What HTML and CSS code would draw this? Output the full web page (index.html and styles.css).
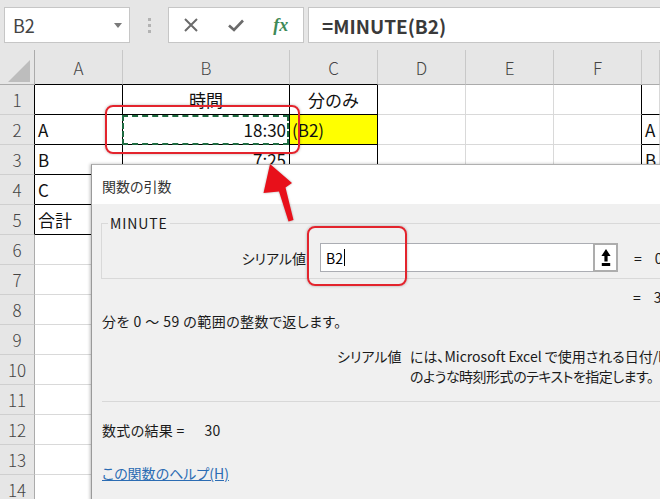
FILE: index.html
```html
<!DOCTYPE html>
<html lang="ja">
<head>
<meta charset="utf-8">
<title>Excel MINUTE</title>
<link rel="stylesheet" href="styles.css">
</head>
<body>
<div class="toolbar">
  <div class="namebox"><span>B2</span><svg class="dd" width="8" height="5" viewBox="0 0 8 5"><polygon points="0,0 8,0 4,5"/></svg></div>
  <div class="grip"><i></i><i></i><i></i></div>
  <div class="fbtns">
    <span class="slot"><svg width="14" height="14" viewBox="0 0 14 14"><path d="M1 1 L13 13 M13 1 L1 13" stroke="#6b6b6b" stroke-width="2" fill="none"/></svg></span>
    <span class="slot"><svg width="16" height="13" viewBox="0 0 16 13"><path d="M1 6.5 L6 11 L15 1.5" stroke="#6b6b6b" stroke-width="2.6" fill="none"/></svg></span>
    <span class="slot fx">fx</span>
  </div>
  <div class="formula">=MINUTE(B2)</div>
</div>

<div class="sheet">
  <div class="c corner"><svg width="24" height="24" viewBox="0 0 24 24"><polygon points="22,2 22,24 0,24" fill="#bdbdbd"/></svg></div>
  <div class="c ch kb">A</div><div class="c ch kb">B</div><div class="c ch kb">C</div><div class="c ch">D</div><div class="c ch">E</div><div class="c ch">F</div><div class="c ch"></div>

  <div class="c rh kr">1</div><div class="c k"></div><div class="c k mid">時間</div><div class="c k mid">分のみ</div><div class="c"></div><div class="c"></div><div class="c kr"></div><div class="c kb"></div>
  <div class="c rh kr">2</div><div class="c k">A</div><div class="c k right sel">18:30</div><div class="c k yellow">(B2)</div><div class="c"></div><div class="c"></div><div class="c kr"></div><div class="c kb">A</div>
  <div class="c rh kr">3</div><div class="c k">B</div><div class="c k right">7:25</div><div class="c k"></div><div class="c"></div><div class="c"></div><div class="c kr"></div><div class="c kb">B</div>
  <div class="c rh kr">4</div><div class="c k">C</div><div class="c k"></div><div class="c k"></div><div class="c"></div><div class="c"></div><div class="c"></div><div class="c"></div>
  <div class="c rh kr">5</div><div class="c k">合計</div><div class="c k"></div><div class="c k"></div><div class="c"></div><div class="c"></div><div class="c"></div><div class="c"></div>
  <div class="c rh">6</div><div class="c"></div><div class="c"></div><div class="c"></div><div class="c"></div><div class="c"></div><div class="c"></div><div class="c"></div>
  <div class="c rh">7</div><div class="c"></div><div class="c"></div><div class="c"></div><div class="c"></div><div class="c"></div><div class="c"></div><div class="c"></div>
  <div class="c rh">8</div><div class="c"></div><div class="c"></div><div class="c"></div><div class="c"></div><div class="c"></div><div class="c"></div><div class="c"></div>
  <div class="c rh">9</div><div class="c"></div><div class="c"></div><div class="c"></div><div class="c"></div><div class="c"></div><div class="c"></div><div class="c"></div>
  <div class="c rh">10</div><div class="c"></div><div class="c"></div><div class="c"></div><div class="c"></div><div class="c"></div><div class="c"></div><div class="c"></div>
  <div class="c rh">11</div><div class="c"></div><div class="c"></div><div class="c"></div><div class="c"></div><div class="c"></div><div class="c"></div><div class="c"></div>
  <div class="c rh">12</div><div class="c"></div><div class="c"></div><div class="c"></div><div class="c"></div><div class="c"></div><div class="c"></div><div class="c"></div>
  <div class="c rh">13</div><div class="c"></div><div class="c"></div><div class="c"></div><div class="c"></div><div class="c"></div><div class="c"></div><div class="c"></div>
  <div class="c rh">14</div><div class="c"></div><div class="c"></div><div class="c"></div><div class="c"></div><div class="c"></div><div class="c"></div><div class="c"></div>
</div>

<div class="dialog">
  <div class="dlg-title">関数の引数</div>
  <div class="dlg-body">
    <div class="group">
      <div class="legend">MINUTE</div>
      <div class="argrow">
        <div class="arglabel">シリアル値</div>
        <div class="arginput">B2<span class="caret"></span></div>
        <div class="refbtn"><svg width="10" height="18" viewBox="0 0 10 18"><polygon points="5,0 9.6,7 6.6,7 6.6,12.5 3.4,12.5 3.4,7 0.4,7" fill="#000"/><rect x="0.8" y="14" width="8.4" height="3" fill="#000"/></svg></div>
        <div class="eq">=</div>
        <div class="val">0.770833333</div>
      </div>
    </div>
    <div class="resrow"><span class="eq">=</span><span class="val res">30</span></div>
    <p class="desc">分を 0 ～ 59 の範囲の整数で返します。</p>
    <div class="argdesc">
      <div class="adlabel">シリアル値</div>
      <div class="adtext"><div>には、Microsoft Excel で使用される日付/時刻コード、または "16:48:00" や "4:48:00 PM"</div><div class="l2">のような時刻形式のテキストを指定します。</div></div>
    </div>
    <div class="sep"></div>
    <div class="result">数式の結果 =<span class="rv">30</span></div>
    <a class="help">この関数のヘルプ(H)</a>
  </div>
</div>

<div class="hl hl1"></div>
<div class="hl hl2"></div>
<svg class="arrow" width="660" height="499" viewBox="0 0 660 499">
  <polygon points="270,164 292,183 285.5,187.5 293.5,220 288.5,221.5 279,191.5 263.5,193" fill="#e8101a"/>
</svg>
</body>
</html>
```

FILE: styles.css
```css
* { box-sizing: border-box; }
html, body {
  margin: 0;
  padding: 0;
  width: 660px;
  height: 499px;
  overflow: hidden;
  background: #fff;
}
body {
  position: relative;
  font-family: "Noto Sans CJK JP", "Noto Sans", sans-serif;
  color: #222;
}

/* ---------- formula bar ---------- */
.toolbar {
  height: 50px;
  background: #e6e6e6;
  display: flex;
  align-items: flex-start;
  padding-top: 7px;
}
.namebox {
  margin-left: 4px;
  width: 126px;
  height: 36px;
  background: #fff;
  border: 1px solid #c6c6c6;
  display: flex;
  align-items: center;
  justify-content: space-between;
  padding: 0 7px 0 8px;
  font-size: 18px;
  line-height: 1;
  color: #444;
}
.namebox .dd { fill: #7a7a7a; }
.grip {
  width: 38px;
  height: 36px;
  display: flex;
  flex-direction: column;
  align-items: center;
  justify-content: center;
  gap: 3px;
}
.grip i {
  display: block;
  width: 3px;
  height: 3px;
  background: #b3b3b3;
}
.fbtns {
  width: 136px;
  height: 36px;
  background: #fff;
  border: 1px solid #c6c6c6;
  display: flex;
  align-items: center;
}
.slot {
  width: 45px;
  display: flex;
  justify-content: center;
  align-items: center;
}
.fx {
  font-family: "Liberation Serif", "DejaVu Serif", serif;
  font-style: italic;
  font-weight: 700;
  font-size: 18px;
  color: #3f8a58;
  line-height: 1;
}
.formula {
  margin-left: 4px;
  flex: 1;
  height: 36px;
  background: #fff;
  border: 1px solid #c6c6c6;
  border-right: 0;
  display: flex;
  align-items: center;
  padding-left: 13px;
  font-size: 19px;
  font-weight: 700;
  color: #3a3a3a;
  line-height: 1;
}

/* ---------- sheet ---------- */
.sheet {
  display: grid;
  grid-template-columns: 35px 88px 167px 88px 88px 88px 88px 18px;
  grid-template-rows: 35px repeat(14, 30px);
}
.c {
  border-right: 1px solid #d9d9d9;
  border-bottom: 1px solid #d9d9d9;
  display: flex;
  align-items: center;
  padding: 0 3px;
  font-size: 17px;
  line-height: 1;
  color: #111;
  white-space: nowrap;
  overflow: hidden;
  background: #fff;
}
.corner {
  background: #e6e6e6;
  border-right-color: #ababab;
  border-bottom-color: #ababab;
  align-items: flex-end;
  justify-content: flex-end;
  padding: 0 2px 2px 0;
}
.ch {
  background: #e6e6e6;
  justify-content: center;
  color: #444;
  font-weight: 300;
  border-right-color: #c8c8c8;
  border-bottom-color: #ababab;
}
.rh {
  background: #e6e6e6;
  justify-content: center;
  color: #444;
  font-weight: 300;
  border-right-color: #ababab;
  border-bottom-color: #cfcfcf;
}
.k { border-right-color: #000; border-bottom-color: #000; }
.kr { border-right-color: #000; }
.kb { border-bottom-color: #000; }
.mid { justify-content: center; }
.right { justify-content: flex-end; }
.yellow { background: #ffff00; padding-left: 2px; }
.sel { position: relative; overflow: visible; }
.sel::after {
  content: "";
  position: absolute;
  left: -1px;
  top: 0;
  right: 0;
  bottom: -1px;
  border: 2px dashed #1e6b41;
}

/* ---------- dialog ---------- */
.dialog {
  position: absolute;
  left: 91px;
  top: 164px;
  width: 720px;
  height: 400px;
  background: #f0f0f0;
  border-left: 1px solid #9a9a9a;
  border-top: 1px solid #b0b0b0;
  box-shadow: -1px 0 3px rgba(0, 0, 0, 0.25);
  font-size: 14px;
  line-height: 20px;
  color: #1a1a1a;
  font-feature-settings: "palt";
}
.dlg-title {
  height: 39px;
  background: #fff;
  padding: 2px 0 0 10px;
  display: flex;
  align-items: center;
  color: #333;
}
.dlg-body {
  padding: 19px 0 0 9px;
}
.group {
  border: 1px solid #d9d9d9;
  border-right: 0;
  padding-bottom: 6px;
}
.legend {
  width: max-content;
  margin: -9px 0 0 6px;
  padding: 0 2px;
  background: #f0f0f0;
  line-height: 16px;
  letter-spacing: 0.9px;
}
.argrow {
  margin-top: 12px;
  height: 29px;
  display: flex;
  align-items: center;
}
.arglabel {
  width: 204px;
  text-align: right;
}
.arginput {
  margin-left: 14px;
  width: 273px;
  height: 29px;
  background: #fff;
  border: 1px solid #abadb3;
  border-right: 0;
  display: flex;
  align-items: center;
  padding-left: 5px;
  color: #000;
}
.caret {
  display: inline-block;
  width: 1px;
  height: 17px;
  margin-left: 1px;
  background: #000;
}
.refbtn {
  width: 25px;
  height: 29px;
  border: 2px solid #adadad;
  background: #fff;
  display: flex;
  align-items: center;
  justify-content: center;
}
.eq { margin-left: 16px; }
.val { margin-left: 13px; white-space: nowrap; }
.resrow {
  margin-top: 8px;
  display: flex;
}
.resrow .eq { margin-left: 532px; }
.desc {
  margin: 4px 0 0 1px;
  letter-spacing: 0.45px;
}
.argdesc {
  margin-top: 15px;
  display: flex;
  white-space: nowrap;
}
.adlabel {
  flex-shrink: 0;
  margin-left: 236px;
  width: 73px;
}
.adtext .l2 {
  letter-spacing: -0.5px;
}
.sep {
  margin: 15px 0 0 1px;
  height: 1px;
  background: #d8d8d8;
}
.result {
  margin: 18px 0 0 1px;
  letter-spacing: 0.3px;
}
.result .rv { margin-left: 20px; }
.help {
  display: inline-block;
  margin: 23px 0 0 1px;
  color: #2b6cb3;
  text-decoration: underline;
}

/* ---------- annotations ---------- */
.hl {
  position: absolute;
  border: 2px solid #e3242d;
  border-radius: 8px;
  box-shadow: 0 0 3px rgba(0, 0, 0, 0.3);
}
.hl1 { left: 105px; top: 105px; width: 195px; height: 49px; }
.hl2 { left: 307px; top: 226px; width: 100px; height: 60px; }
.arrow {
  position: absolute;
  left: 0;
  top: 0;
  pointer-events: none;
  filter: drop-shadow(0 0 1px rgba(0, 0, 0, 0.3));
}
```
